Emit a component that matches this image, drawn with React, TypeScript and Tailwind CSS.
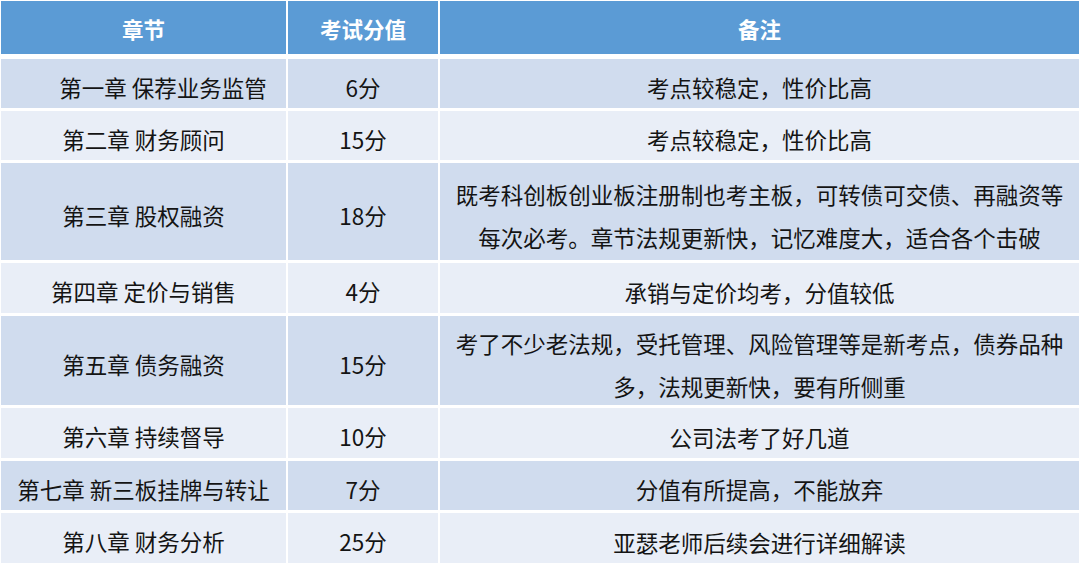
import React from "react";

type Row = { ch: string; score: string; note: string[]; h: string; bg: string; pl?: string };

const rows: Row[] = [
  { ch: "第一章 保荐业务监管", score: "6分", note: ["考点较稳定，性价比高"], h: "h-[49px]", bg: "bg-[#d0dcee]", pl: "pl-[39px]" },
  { ch: "第二章 财务顾问", score: "15分", note: ["考点较稳定，性价比高"], h: "h-[49px]", bg: "bg-[#e9eef7]" },
  {
    ch: "第三章 股权融资",
    score: "18分",
    note: ["既考科创板创业板注册制也考主板，可转债可交债、再融资等", "每次必考。章节法规更新快，记忆难度大，适合各个击破"],
    h: "h-[97px]",
    bg: "bg-[#d0dcee]",
  },
  { ch: "第四章 定价与销售", score: "4分", note: ["承销与定价均考，分值较低"], h: "h-[50px]", bg: "bg-[#e9eef7]" },
  {
    ch: "第五章 债务融资",
    score: "15分",
    note: ["考了不少老法规，受托管理、风险管理等是新考点，债券品种", "多，法规更新快，要有所侧重"],
    h: "h-[89px]",
    bg: "bg-[#d0dcee]",
  },
  { ch: "第六章 持续督导", score: "10分", note: ["公司法考了好几道"], h: "h-[50px]", bg: "bg-[#e9eef7]" },
  { ch: "第七章 新三板挂牌与转让", score: "7分", note: ["分值有所提高，不能放弃"], h: "h-[49px]", bg: "bg-[#d0dcee]" },
  { ch: "第八章 财务分析", score: "25分", note: ["亚瑟老师后续会进行详细解读"], h: "h-[50px]", bg: "bg-[#e9eef7]" },
];

const font = { fontFamily: '"Microsoft YaHei", "Noto Sans CJK SC", "Noto Sans", sans-serif' };

export default function App() {
  return (
    <div className="w-[1080px] h-[565px] bg-white pt-[1px] pl-[1px] overflow-hidden" style={font}>
      <div className="flex gap-[2px] h-[53px] text-white font-bold text-[21.5px]">
        <div className="w-[285px] bg-[#5b9bd5] flex items-center justify-center pt-[4px]">章节</div>
        <div className="w-[150px] bg-[#5b9bd5] flex items-center justify-center pt-[4px]">考试分值</div>
        <div className="w-[639px] bg-[#5b9bd5] flex items-center justify-center pt-[4px]">备注</div>
      </div>
      <div className="mt-[5px] flex flex-col gap-[3px] text-[22.5px] text-[#141414]">
        {rows.map((r, i) => (
          <div key={i} className={`flex gap-[2px] ${r.h}`}>
            <div className={`w-[285px] ${r.bg} flex items-center justify-center whitespace-nowrap pt-[8px] ${r.pl ?? ""}`}>{r.ch}</div>
            <div className={`w-[150px] ${r.bg} flex items-center justify-center pt-[8px]`}>{r.score}</div>
            <div className={`w-[639px] ${r.bg} flex flex-col items-center justify-center leading-[43px] whitespace-nowrap pt-[8px]`}>
              {r.note.map((n, j) => (
                <div key={j}>{n}</div>
              ))}
            </div>
          </div>
        ))}
      </div>
    </div>
  );
}
